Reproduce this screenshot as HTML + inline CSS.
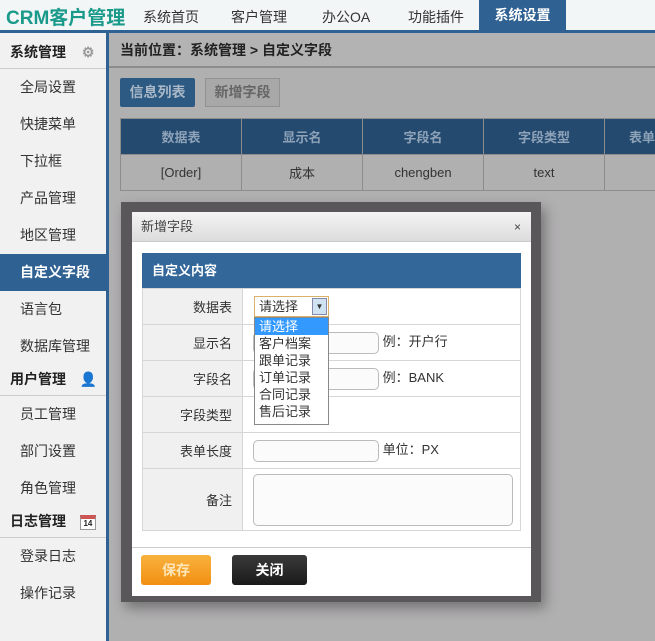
<!DOCTYPE html>
<html><head><meta charset="utf-8"><style>
*{margin:0;padding:0;box-sizing:border-box}
html,body{background:#b1b0b1}
body{width:655px;height:641px;overflow:hidden;font-family:"Liberation Sans","Noto Sans CJK SC",sans-serif;font-size:13px;color:#333;position:relative}
.a{position:absolute}
.top{left:0;top:0;width:655px;background:#f3f6f7;border-bottom:3px solid #2f6193;height:33px}
.logo{left:6px;top:3px;font-size:19px;font-weight:bold;color:#1a9a8a}
.nav{top:7px;font-size:14px;color:#333}
.side{left:0;top:33px;width:109px;height:608px;background:#f1f1f1;border-right:3px solid #2f6193}
.it{left:0;width:106px;height:37px;line-height:37px;padding-left:20px;font-size:14px;color:#333}
.hd{left:0;width:106px;height:34px;line-height:34px;padding-left:10px;font-size:14px;font-weight:bold;color:#222;border-bottom:1px solid #ccc}
.act{background:#2f6193;color:#fff;font-weight:bold}
.t td{border:1px solid #8c8c8c;text-align:center;background:#b1b0b1}
.t .h{background:#244a70;color:#8ea2b8;font-weight:bold}
.f td{border:1px solid #d6d6d6;height:36px}
.lab{background:#f0f0f0;text-align:right;padding-right:10px;width:100px;color:#333}
.inp{display:inline-block;width:126px;height:22px;border:1px solid #bbb;border-radius:5px;background:#fbfbfb;vertical-align:middle}
</style></head><body>
<div class="a top"></div>
<div class="a logo">CRM客户管理</div>
<div class="a nav" style="left:143px">系统首页</div>
<div class="a nav" style="left:231px">客户管理</div>
<div class="a nav" style="left:322px">办公OA</div>
<div class="a nav" style="left:408px">功能插件</div>
<div class="a" style="left:479px;top:0;width:87px;height:30px;background:#2f6193;color:#fff;font-size:14px;font-weight:bold;line-height:30px;text-align:center">系统设置</div>

<div class="a side"></div>
<div class="a hd" style="top:35px">系统管理 <span style="color:#999;margin-left:12px">⚙</span></div>
<div class="a it" style="top:69px">全局设置</div>
<div class="a it" style="top:106px">快捷菜单</div>
<div class="a it" style="top:143px">下拉框</div>
<div class="a it" style="top:180px">产品管理</div>
<div class="a it" style="top:217px">地区管理</div>
<div class="a it act" style="top:254px">自定义字段</div>
<div class="a it" style="top:291px">语言包</div>
<div class="a it" style="top:328px">数据库管理</div>
<div class="a hd" style="top:362px">用户管理 <span style="color:#d99a50;margin-left:10px">👤</span></div>
<div class="a it" style="top:396px">员工管理</div>
<div class="a it" style="top:433px">部门设置</div>
<div class="a it" style="top:470px">角色管理</div>
<div class="a hd" style="top:504px">日志管理 <span style="display:inline-block;margin-left:10px;width:16px;height:15px;border:1px solid #999;border-top:4px solid #c55;font-size:8px;line-height:9px;text-align:center;vertical-align:middle;background:#fff">14</span></div>
<div class="a it" style="top:538px">登录日志</div>
<div class="a it" style="top:575px">操作记录</div>

<div class="a" style="left:109px;top:33px;width:546px;height:35px;border-bottom:2px solid #8c8c8c;background:#b4b3b4;font-weight:bold;font-size:14px;line-height:35px;padding-left:11px;color:#222">当前位置：系统管理 &gt; 自定义字段</div>
<div class="a" style="left:120px;top:78px;width:75px;height:29px;background:#2d5a82;border-radius:2px;color:#aab8c8;font-weight:bold;font-size:14px;line-height:29px;text-align:center">信息列表</div>
<div class="a" style="left:205px;top:78px;width:75px;height:29px;background:#a9a8a9;border:1px solid #929292;color:#666;font-weight:bold;font-size:14px;line-height:27px;text-align:center">新增字段</div>
<table class="a t" style="left:120px;top:118px;border-collapse:collapse;width:560px">
<tr style="height:36px"><td class="h" style="width:121px">数据表</td><td class="h" style="width:121px">显示名</td><td class="h" style="width:121px">字段名</td><td class="h" style="width:121px">字段类型</td><td class="h">表单</td></tr>
<tr style="height:36px;color:#333"><td>[Order]</td><td>成本</td><td>chengben</td><td>text</td><td></td></tr>
</table>

<div class="a" style="left:121px;top:202px;width:420px;height:400px;background:#59575a;box-shadow:4px 6px 12px rgba(0,0,0,.35)"></div>
<div class="a" style="left:132px;top:212px;width:399px;height:384px;background:#fff"></div>
<div class="a" style="left:132px;top:212px;width:399px;height:30px;background:linear-gradient(#f4f4f4,#dcdcdc);border-bottom:1px solid #ccc;line-height:30px;padding-left:9px;color:#444">新增字段<span style="position:absolute;right:10px;font-size:12px">×</span></div>
<div class="a" style="left:142px;top:253px;width:379px;height:35px;background:#336699;color:#fff;font-weight:bold;line-height:35px;padding-left:10px">自定义内容</div>
<table class="a f" style="left:142px;top:288px;width:379px;border-collapse:collapse">
<tr><td class="lab">数据表</td><td style="text-align:left;padding-left:10px"></td></tr>
<tr><td class="lab">显示名</td><td style="text-align:left;padding-left:10px"><span class="inp"></span> 例：开户行</td></tr>
<tr><td class="lab">字段名</td><td style="text-align:left;padding-left:10px"><span class="inp"></span> 例：BANK</td></tr>
<tr><td class="lab">字段类型</td><td></td></tr>
<tr><td class="lab">表单长度</td><td style="text-align:left;padding-left:10px"><span class="inp"></span> 单位：PX</td></tr>
<tr><td class="lab" style="height:62px">备注</td><td style="text-align:left;padding-left:10px"><span class="inp" style="width:260px;height:52px"></span></td></tr>
</table>
<div class="a" style="left:254px;top:296px;width:75px;height:21px;border:1px solid #d9b26a;background:#fff;font-size:13px;line-height:19px;padding-left:4px">请选择<span style="position:absolute;right:1px;top:1px;width:15px;height:17px;background:#cfe3f3;border:1px solid #88a;font-size:8px;text-align:center;line-height:15px">▼</span></div>
<div class="a" style="left:254px;top:317px;width:75px;height:108px;border:1px solid #888;background:#fff;font-size:13px;line-height:17px">
<div style="background:#3399ff;color:#fff;padding-left:4px">请选择</div>
<div style="padding-left:4px">客户档案</div><div style="padding-left:4px">跟单记录</div><div style="padding-left:4px">订单记录</div><div style="padding-left:4px">合同记录</div><div style="padding-left:4px">售后记录</div></div>
<div class="a" style="left:132px;top:547px;width:399px;border-top:1px solid #ccc"></div>
<div class="a" style="left:141px;top:555px;width:70px;height:30px;background:linear-gradient(#f9b23e,#f18f12);border-radius:3px;color:#fde6b8;font-weight:bold;font-size:14px;line-height:30px;text-align:center">保存</div>
<div class="a" style="left:232px;top:555px;width:75px;height:30px;background:linear-gradient(#3a3a3a,#1a1a1a);border-radius:3px;color:#fff;font-weight:bold;font-size:14px;line-height:30px;text-align:center">关闭</div>
</body></html>
